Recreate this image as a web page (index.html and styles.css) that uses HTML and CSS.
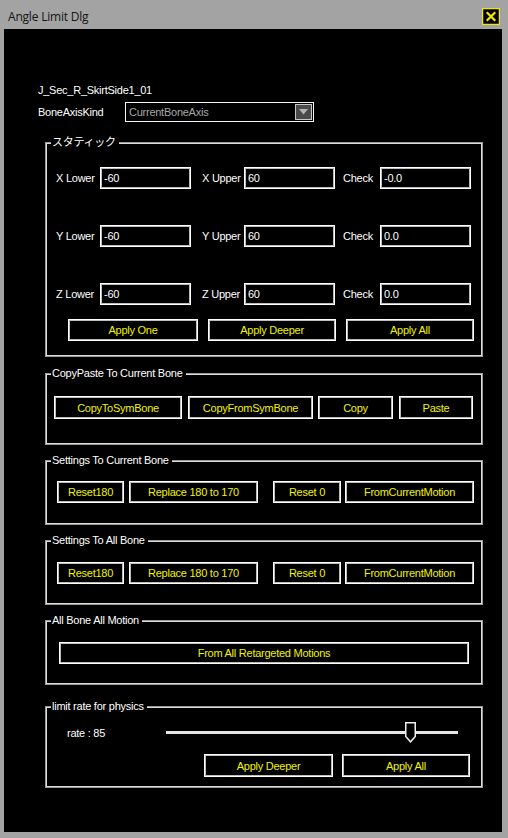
FILE: index.html
```html
<!DOCTYPE html>
<html lang="ja">
<head>
<meta charset="utf-8">
<title>Angle Limit Dlg</title>
<link rel="stylesheet" href="styles.css">
</head>
<body>
<div class="window">
  <div class="titlebar">
    <span class="title">Angle Limit Dlg</span>
    <button class="close" aria-label="Close">
      <svg width="18" height="17" viewBox="0 0 18 17">
        <rect x="0.5" y="0.5" width="17" height="16" fill="#000" stroke="#f2e600" stroke-width="1.5"/>
        <path d="M5.5 5 L12.5 12 M12.5 5 L5.5 12" stroke="#f2e600" stroke-width="2.2" stroke-linecap="square"/>
      </svg>
    </button>
  </div>
  <div class="client">
    <div class="bone-name">J_Sec_R_SkirtSide1_01</div>
    <div class="axis-row">
      <span class="axis-label">BoneAxisKind</span>
      <div class="combo">
        <span class="combo-text">CurrentBoneAxis</span>
        <span class="combo-arrow">
          <svg width="9" height="6" viewBox="0 0 9 6"><path d="M0 0 H9 L4.5 5.5 Z" fill="#b4b4b4"/></svg>
        </span>
      </div>
    </div>

    <div class="group g-static">
      <span class="group-label">スタティック</span>
      <div class="limit-grid">
        <span class="lbl">X Lower</span><div class="field">-60</div>
        <span class="lbl lbl-upper">X Upper</span><div class="field">60</div>
        <span class="lbl lbl-check">Check</span><div class="field">-0.0</div>

        <span class="lbl">Y Lower</span><div class="field">-60</div>
        <span class="lbl lbl-upper">Y Upper</span><div class="field">60</div>
        <span class="lbl lbl-check">Check</span><div class="field">0.0</div>

        <span class="lbl">Z Lower</span><div class="field">-60</div>
        <span class="lbl lbl-upper">Z Upper</span><div class="field">60</div>
        <span class="lbl lbl-check">Check</span><div class="field">0.0</div>
      </div>
      <div class="btn-row apply-row">
        <button class="btn w130">Apply One</button>
        <button class="btn w128">Apply Deeper</button>
        <button class="btn w128">Apply All</button>
      </div>
    </div>

    <div class="group g-copy">
      <span class="group-label">CopyPaste To Current Bone</span>
      <div class="btn-row copy-row">
        <button class="btn w128 tall">CopyToSymBone</button>
        <button class="btn w125 tall">CopyFromSymBone</button>
        <button class="btn w75 tall">Copy</button>
        <button class="btn w74 tall">Paste</button>
      </div>
    </div>

    <div class="group g-settings g-current">
      <span class="group-label">Settings To Current Bone</span>
      <div class="btn-row settings-row">
        <button class="btn w67">Reset180</button>
        <button class="btn w129">Replace 180 to 170</button>
        <button class="btn w68 gap-wide">Reset 0</button>
        <button class="btn w129">FromCurrentMotion</button>
      </div>
    </div>

    <div class="group g-settings g-all">
      <span class="group-label">Settings To All Bone</span>
      <div class="btn-row settings-row">
        <button class="btn w67">Reset180</button>
        <button class="btn w129">Replace 180 to 170</button>
        <button class="btn w68 gap-wide">Reset 0</button>
        <button class="btn w129">FromCurrentMotion</button>
      </div>
    </div>

    <div class="group g-motion">
      <span class="group-label">All Bone All Motion</span>
      <div class="btn-row motion-row">
        <button class="btn w410">From All Retargeted Motions</button>
      </div>
    </div>

    <div class="group g-rate">
      <span class="group-label">limit rate for physics</span>
      <div class="slider-row">
        <span class="rate-label">rate : 85</span>
        <div class="track">
          <svg class="thumb" width="11" height="21" viewBox="0 0 11 21">
            <path d="M0.75 0.75 H10.25 V14.5 L5.5 19.8 L0.75 14.5 Z" fill="#000" stroke="#f0f0f0" stroke-width="1.5"/>
          </svg>
        </div>
      </div>
      <div class="btn-row rate-row">
        <button class="btn w129 tall">Apply Deeper</button>
        <button class="btn w128 tall">Apply All</button>
      </div>
    </div>
  </div>
</div>
</body>
</html>
```

FILE: styles.css
```css
* {
  box-sizing: border-box;
}

html, body {
  margin: 0;
  padding: 0;
}

body {
  width: 508px;
  height: 838px;
  background: #a3a3a3;
  overflow: hidden;
}

.window {
  height: 838px;
  display: flex;
  flex-direction: column;
}

.titlebar {
  height: 29px;
  flex: none;
  display: flex;
  justify-content: space-between;
  align-items: flex-start;
  padding: 0 8px;
}

.title {
  margin-top: 9px;
  font-family: "Open Sans", "Noto Sans", sans-serif;
  font-size: 12px;
  line-height: 16px;
  letter-spacing: -0.2px;
  color: #141414;
}

.close {
  margin-top: 8px;
  width: 18px;
  height: 17px;
  padding: 0;
  border: 0;
  background: none;
  display: block;
}

.close svg {
  display: block;
}

.client {
  flex: 1;
  margin: 0 6px 6px 4px;
  background: #000;
  padding: 55px 0 0 34px;
  font-family: "Liberation Sans", "Noto Sans CJK JP", sans-serif;
  font-size: 11px;
  letter-spacing: -0.25px;
  color: #fff;
}

.bone-name {
  height: 13px;
  line-height: 13px;
}

.axis-row {
  margin-top: 5px;
  height: 20px;
  display: flex;
  align-items: center;
}

.axis-label {
  width: 87px;
}

.combo {
  width: 189px;
  height: 20px;
  border: 1px solid #f4f4f4;
  display: flex;
  align-items: center;
  justify-content: space-between;
  padding: 0 1px 0 3px;
  color: #a8a8a8;
}

.combo-arrow {
  width: 17px;
  height: 16px;
  border: 1px solid #c8c8c8;
  background: #4a4a4a;
  display: flex;
  align-items: center;
  justify-content: center;
}

.combo-arrow svg {
  display: block;
}

/* group boxes */
.group {
  position: relative;
  margin-left: 7px;
  width: 438px;
  border: 1px solid #9a9a9a;
  box-shadow: inset 0 0 0 1px #dcdcdc;
}

.group-label {
  position: absolute;
  top: -7px;
  left: 5px;
  padding: 0 3px 0 1px;
  background: #000;
  line-height: 13px;
  color: #fff;
  white-space: nowrap;
}

.g-static {
  margin-top: 20px;
  height: 215px;
  padding: 24px 0 0 10px;
}

.g-copy {
  margin-top: 16px;
  height: 72px;
  padding: 22px 0 0 8px;
}

.g-settings {
  margin-top: 15px;
  height: 65px;
  padding-left: 11px;
}

.g-current {
  padding-top: 20px;
}

.g-all {
  padding-top: 21px;
}

.g-motion {
  margin-top: 15px;
  height: 65px;
  padding: 21px 0 0 13px;
}

.g-rate {
  margin-top: 21px;
  height: 82px;
  padding: 15px 0 0 21px;
}

/* limit grid */
.limit-grid {
  display: grid;
  grid-template-columns: 44px 91px 53px 91px 45px 91px;
  grid-auto-rows: 22px;
  row-gap: 36px;
  align-items: center;
}

.lbl {
  white-space: nowrap;
}

.lbl-upper {
  padding-left: 11px;
}

.lbl-check {
  padding-left: 8px;
}

.field {
  height: 22px;
  border: 1px solid #ffffff;
  box-shadow: inset 0 0 0 1px #bdbdbd;
  padding: 0 3px;
  display: flex;
  align-items: center;
  color: #fff;
}

/* buttons */
.btn-row {
  display: flex;
}

.btn {
  height: 22px;
  padding: 0;
  margin: 0;
  background: #000;
  border: 1px solid #ffffff;
  box-shadow: inset 0 0 0 1px #bdbdbd;
  color: #f2f200;
  font-family: "Liberation Sans", sans-serif;
  font-size: 11px;
  letter-spacing: -0.25px;
  text-align: center;
  white-space: nowrap;
}

.btn.tall {
  height: 23px;
}

.apply-row {
  margin-top: 14px;
  margin-left: 12px;
  gap: 9px;
}

.apply-row .btn + .btn {
  margin-left: 1px;
}

.copy-row .btn:nth-child(2) {
  margin-left: 6px;
}

.copy-row .btn:nth-child(3) {
  margin-left: 5px;
}

.copy-row .btn:nth-child(4) {
  margin-left: 6px;
}

.settings-row .btn:nth-child(2) {
  margin-left: 5px;
}

.settings-row .btn.gap-wide {
  margin-left: 15px;
}

.settings-row .btn:nth-child(4) {
  margin-left: 4px;
}

.rate-row {
  margin-top: 11px;
  margin-left: 137px;
  gap: 9px;
}

.w410 { width: 410px; }
.w130 { width: 130px; }
.w129 { width: 129px; }
.w128 { width: 128px; }
.w125 { width: 125px; }
.w75 { width: 75px; }
.w74 { width: 74px; }
.w68 { width: 68px; }
.w67 { width: 67px; }

/* slider */
.slider-row {
  height: 21px;
  display: flex;
  align-items: center;
}

.rate-label {
  width: 99px;
}

.track {
  position: relative;
  width: 292px;
  height: 3px;
  background: #e6e6e6;
}

.thumb {
  position: absolute;
  left: 239px;
  top: -9px;
  display: block;
}
```
